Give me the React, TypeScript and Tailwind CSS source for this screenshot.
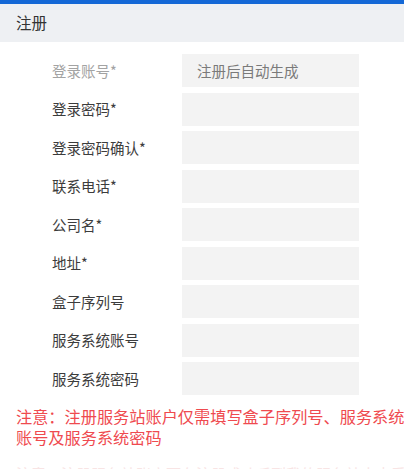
import React from "react";

const fields = [
  { label: "登录账号*", value: "注册后自动生成", disabled: true },
  { label: "登录密码*" },
  { label: "登录密码确认*" },
  { label: "联系电话*" },
  { label: "公司名*" },
  { label: "地址*" },
  { label: "盒子序列号" },
  { label: "服务系统账号" },
  { label: "服务系统密码" },
];

const App = () => {
  return (
    <div
      className="w-[404px] h-[469px] overflow-hidden bg-white"
      style={{ fontFamily: '"Noto Sans CJK SC", "Noto Sans", sans-serif' }}
    >
      <div className="h-1 bg-[#1468d6]" />
      <div className="h-[38px] bg-[#eef0f3] flex items-center px-4 text-[15.5px] text-[#333]">
        注册
      </div>
      <form className="pt-3 flex flex-col gap-[5.5px]">
        {fields.map((f) => (
          <div key={f.label} className="flex items-center h-[33px]">
            <label
              className={
                f.disabled
                  ? "w-[182px] pl-[52px] shrink-0 text-[14.5px] text-[#a3a3a3] whitespace-nowrap"
                  : "w-[182px] pl-[52px] shrink-0 text-[14.5px] text-[#3c3c3c] whitespace-nowrap"
              }
            >
              {f.label}
            </label>
            <div className="w-[177px] h-[33px] bg-[#f3f3f3] flex items-center pl-[15px] text-[14.5px] text-[#7a7a7a]">
              {f.value ?? ""}
            </div>
          </div>
        ))}
      </form>
      <div className="mt-[11px] pl-4 w-[440px] text-[16.2px] leading-[21px] text-[#ef4a4f] whitespace-nowrap flex flex-col">
        <span>注意：注册服务站账户仅需填写盒子序列号、服务系统</span>
        <span>账号及服务系统密码</span>
      </div>
      <p className="mt-[16px] pl-4 text-[15px] leading-[20px] text-[#f8e4e4] whitespace-nowrap">
        注意：注册服务站账户可在注册成功后到我的服务站中查看
      </p>
    </div>
  );
};

export default App;
